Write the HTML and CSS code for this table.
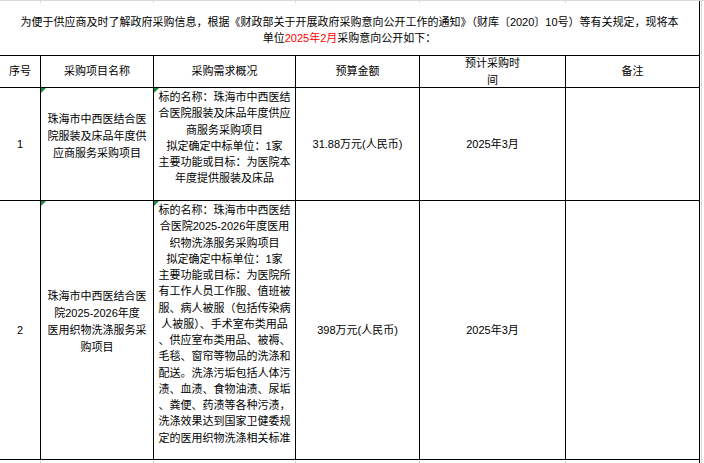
FILE: index.html
```html
<!DOCTYPE html>
<html lang="zh-CN">
<head>
<meta charset="utf-8">
<title>采购意向公开</title>
<link rel="stylesheet" href="styles.css">
</head>
<body>
<div class="sheet">
  <div class="grid">
    <div class="tick"></div><div class="tick"></div><div class="tick"></div><div class="tick"></div><div class="tick"></div><div class="tick last"></div>

    <div class="cell title"><p class="txt">为便于供应商及时了解政府采购信息，根据《财政部关于开展政府采购意向公开工作的通知》（财库〔2020〕10号）等有关规定，现将本<br>单位<span class="red">2025年2月</span>采购意向公开如下：</p></div>

    <div class="cell head"><p class="txt">序号</p></div>
    <div class="cell head"><p class="txt">采购项目名称</p></div>
    <div class="cell head"><p class="txt">采购需求概况</p></div>
    <div class="cell head"><p class="txt">预算金额</p></div>
    <div class="cell head"><p class="txt">预计采购时<br>间</p></div>
    <div class="cell head"><p class="txt">备注</p></div>

    <div class="cell mid"><p class="txt">1</p></div>
    <div class="cell name flag"><p class="txt">珠海市中西医结合医<br>院服装及床品年度供<br>应商服务采购项目</p></div>
    <div class="cell desc flag"><p class="txt">标的名称：珠海市中西医结<br>合医院服装及床品年度供应<br>商服务采购项目<br>拟定确定中标单位：1家<br>主要功能或目标：为医院本<br>年度提供服装及床品</p></div>
    <div class="cell mid"><p class="txt">31.88万元(人民币)</p></div>
    <div class="cell mid"><p class="txt">2025年3月</p></div>
    <div class="cell mid"></div>

    <div class="cell mid"><p class="txt">2</p></div>
    <div class="cell name flag"><p class="txt">珠海市中西医结合医<br>院2025-2026年度<br>医用织物洗涤服务采<br>购项目</p></div>
    <div class="cell desc flag"><p class="txt">标的名称：珠海市中西医结<br>合医院2025-2026年度医用<br>织物洗涤服务采购项目<br>拟定确定中标单位：1家<br>主要功能或目标：为医院所<br>有工作人员工作服、值班被<br>服、病人被服（包括传染病<br>人被服）、手术室布类用品<br>、供应室布类用品、被褥、<br>毛毯、窗帘等物品的洗涤和<br>配送。洗涤污垢包括人体污<br>渍、血渍、食物油渍、尿垢<br>、粪便、药渍等各种污渍，<br>洗涤效果达到国家卫健委规<br>定的医用织物洗涤相关标准</p></div>
    <div class="cell mid"><p class="txt">398万元(人民币)</p></div>
    <div class="cell mid"><p class="txt">2025年3月</p></div>
    <div class="cell mid"></div>

    <div class="tick"></div><div class="tick"></div><div class="tick"></div><div class="tick"></div><div class="tick"></div><div class="tick last"></div>
  </div>
  <div class="edge"></div>
</div>
</body>
</html>
```
FILE: styles.css
```css
html, body {
  margin: 0;
  padding: 0;
  background: #fff;
}

body {
  font-family: "Liberation Sans", "Noto Sans CJK SC", sans-serif;
  font-size: 11px;
  color: #000;
  overflow: hidden;
}

.sheet {
  display: flex;
  height: 463px;
  border-top: 1px solid #d9d9d9;
  box-sizing: border-box;
}

.grid {
  display: grid;
  grid-template-columns: 41px 113px 142px 124px 146px 134px;
  grid-template-rows: 2px 53px 32px 113px 259px 4px;
  width: 700px;
  flex: none;
}

.edge {
  width: 1px;
  margin-left: 1px;
  background: #d9d9d9;
}

.tick {
  border-right: 1px solid #d9d9d9;
  box-sizing: border-box;
}

.tick.last {
  border-right-color: #000;
}

.cell {
  box-sizing: border-box;
  border-right: 1px solid #000;
  border-bottom: 1px solid #000;
  display: flex;
  flex-direction: column;
  align-items: center;
  justify-content: center;
  text-align: center;
  white-space: nowrap;
  position: relative;
}

.txt {
  margin: 0;
}

.title {
  grid-column: 1 / -1;
  line-height: 16px;
  padding-top: 1px;
}

.red {
  color: #ff0000;
}

.head {
  line-height: 17px;
}

.mid {
  line-height: 16px;
}

.name {
  line-height: 17px;
  padding-bottom: 16px;
}

.desc {
  justify-content: flex-start;
  line-height: 16.25px;
  padding-top: 1px;
}

.flag::before {
  content: "";
  position: absolute;
  left: 0;
  top: 0;
  border-top: 5px solid #1d8a3a;
  border-right: 5px solid transparent;
}
```
